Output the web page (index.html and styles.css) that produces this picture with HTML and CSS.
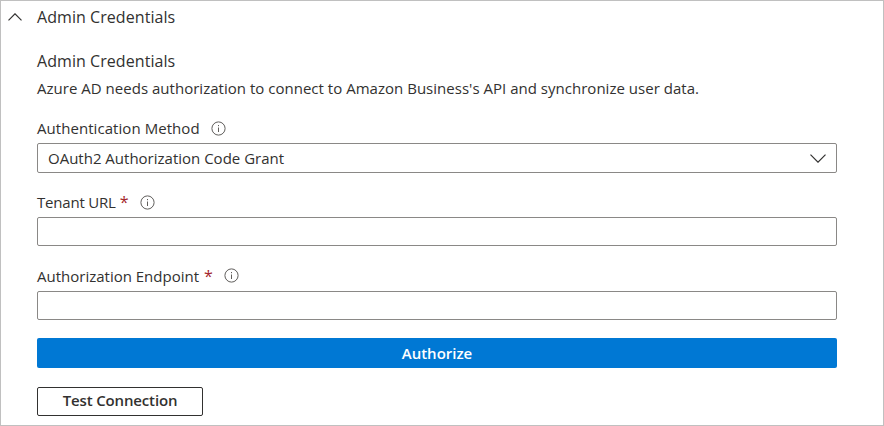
FILE: index.html
```html
<!DOCTYPE html>
<html lang="en">
<head>
<meta charset="utf-8">
<title>Admin Credentials</title>
<link rel="stylesheet" href="styles.css">
</head>
<body>
<main class="panel">
  <header class="section-toggle">
    <svg class="chevron-up" viewBox="0 0 14 8"><path d="M.5 7.3 7 .8l6.500 6.500"/></svg>
    <span class="title">Admin Credentials</span>
  </header>
  <section class="content">
    <h2 class="title">Admin Credentials</h2>
    <p class="description">Azure AD needs authorization to connect to Amazon Business's API and synchronize user data.</p>

    <div class="label"><span class="method-text">Authentication Method</span>
      <svg class="info" viewBox="0 0 15 15"><circle cx="7.500" cy="7.500" r="6.600"/><path d="M7.500 6.500v4.500M7.500 4v1.200"/></svg>
    </div>
    <div class="field select"><span class="select-text">OAuth2 Authorization Code Grant</span>
      <svg class="chevron-down" viewBox="0 0 16 9"><path d="m.5.700 7.500 7.500L15.500.700"/></svg>
    </div>

    <div class="label"><span class="tenant-text">Tenant URL</span><span class="required">*</span>
      <svg class="info" viewBox="0 0 15 15"><circle cx="7.500" cy="7.500" r="6.600"/><path d="M7.500 6.500v4.500M7.500 4v1.200"/></svg>
    </div>
    <div class="field"></div>

    <div class="label endpoint-label"><span class="endpoint-text">Authorization Endpoint</span><span class="required">*</span>
      <svg class="info raised" viewBox="0 0 15 15"><circle cx="7.500" cy="7.500" r="6.600"/><path d="M7.500 6.500v4.500M7.500 4v1.200"/></svg>
    </div>
    <div class="field"></div>

    <button class="authorize" type="button">Authorize</button>
    <button class="test" type="button">Test Connection</button>
  </section>
</main>
</body>
</html>
```
FILE: styles.css
```css
* { box-sizing: border-box; }
body {
  margin: 0;
  background: #fff;
  color: #323130;
  font-family: "Open Sans", "Noto Sans", sans-serif;
  font-size: 15px;
}
svg { display: block; flex: none; fill: none; stroke: #323130; stroke-width: 1.2; }
span, p, h2 { white-space: nowrap; }
.panel { width: 884px; height: 426px; border: 1px solid #c0c0c0; overflow: hidden; }
.section-toggle { display: flex; align-items: center; height: 32px; padding-left: 7px; }
.chevron-up { width: 14px; height: 8px; margin-right: 15px; }
.title { margin: 0; font-size: 16px; font-weight: 400; line-height: 24px; letter-spacing: 0.06px; }
.content { display: flex; flex-direction: column; width: 800px; margin-left: 36px; padding-top: 16px; }
.description { margin: 4px 0 0; line-height: 22px; letter-spacing: 0.02px; }
.label { display: flex; align-items: center; height: 28px; margin-top: 16px; padding-bottom: 2px; line-height: 26px; }
.method-text { letter-spacing: 0.06px; }
.tenant-text { letter-spacing: -0.2px; }
.endpoint-label { height: 29px; }
.required { margin-left: 5px; color: #a4262c; font-size: 16px; }
.tenant-text + .required { margin-left: 4px; }
.info { width: 15px; height: 15px; margin-left: 11px; stroke: #605e5c; stroke-width: 1; }
.raised { margin-top: -1px; }
.field { height: 29px; border: 1px solid #8a8886; border-radius: 2px; }
.select { display: flex; align-items: center; justify-content: space-between; height: 30px; padding: 0 10px; }
.chevron-down { width: 16px; height: 9px; }
button { padding: 0; border-radius: 2px; font: 600 15px/28px "Open Sans", sans-serif; }
.authorize { height: 30px; margin-top: 18px; padding-bottom: 1px; border: 0; background: #0078d4; color: #fff; }
.test { width: 166px; height: 29px; margin-top: 19px; padding-bottom: 2px; border: 1px solid #323130; background: #fff; color: #323130; line-height: 25px; letter-spacing: -0.15px; }
```
